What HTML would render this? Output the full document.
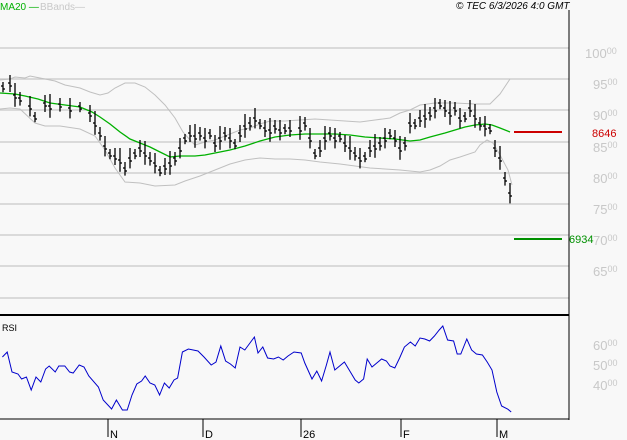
<!DOCTYPE html><html><head><style>
body{margin:0;background:#f8f8f8;}
svg{display:block;font-family:"Liberation Sans",sans-serif}
.l{fill:#c8c8c8;font-size:13px}
.s{font-size:9px}
</style></head><body>
<svg id="c" width="627" height="440" xmlns="http://www.w3.org/2000/svg">
<rect width="627" height="440" fill="#f8f8f8"/>
<g stroke="#c8c8c8" stroke-width="1.2">
<line x1="0" y1="48" x2="569" y2="48"/><line x1="0" y1="79" x2="569" y2="79"/><line x1="0" y1="110" x2="569" y2="110"/><line x1="0" y1="142" x2="569" y2="142"/><line x1="0" y1="173" x2="569" y2="173"/><line x1="0" y1="204" x2="569" y2="204"/><line x1="0" y1="235" x2="569" y2="235"/><line x1="0" y1="266" x2="569" y2="266"/><line x1="0" y1="298" x2="569" y2="298"/>
</g>
<g class="l">
<text x="585" y="58">100<tspan class="s" dy="-4">00</tspan></text>
<text x="593" y="89">95<tspan class="s" dy="-4">00</tspan></text>
<text x="593" y="120">90<tspan class="s" dy="-4">00</tspan></text>
<text x="593" y="152">85<tspan class="s" dy="-4">00</tspan></text>
<text x="593" y="183">80<tspan class="s" dy="-4">00</tspan></text>
<text x="593" y="214">75<tspan class="s" dy="-4">00</tspan></text>
<text x="593" y="245">70<tspan class="s" dy="-4">00</tspan></text>
<text x="593" y="276">65<tspan class="s" dy="-4">00</tspan></text>
<text x="593" y="350">60<tspan class="s" dy="-4">00</tspan></text>
<text x="593" y="370">50<tspan class="s" dy="-4">00</tspan></text>
<text x="593" y="390">40<tspan class="s" dy="-4">00</tspan></text>
</g>
<polyline fill="none" stroke="#c0c0c0" points="0,80 10,79 15,77 25,78 30,76 40,78 55,81 65,85 80,88 90,92 100,95 108,93 115,88 125,83 135,83 145,87 155,95 165,105 175,118 183,132 190,140 195,145 205,142 215,140 225,136 240,130 250,128 260,124 270,121 285,121 300,120 315,119 330,120 345,121 360,122 375,120 390,118 400,113 410,110 420,105 435,103 455,103 475,104 490,104 500,94 510,79"/>
<polyline fill="none" stroke="#c0c0c0" points="0,109 10,108 20,109 35,123 45,126 60,126 80,129 95,136 105,150 115,168 125,182 140,183 155,186 175,185 185,181 200,176 215,170 230,164 245,160 260,158 275,159 290,159 305,160 320,162 340,164 355,166 370,168 385,169 400,170 410,171 420,172 430,170 440,166 450,160 460,157 475,152 480,145 487,140 493,143 500,155 508,170 512,185"/>
<polyline fill="none" stroke="#00b000" stroke-width="1.3" points="0,93 15,94 25,96 38,99 50,103 65,105 80,107 92,112 100,117 110,124 120,132 130,139 140,143 150,147 160,152 170,157 180,156 195,156 205,155 215,153 230,150 245,146 260,141 275,137 290,135 305,134 320,134 335,134 350,135 365,137 380,138 395,139 410,141 420,140 430,137 445,133 455,130 465,127 475,125 485,124 492,125 500,128 510,132"/>
<g id="bars" stroke="#000" stroke-width="1.3"></g>
<line x1="514" y1="132" x2="562" y2="132" stroke="#cc0000" stroke-width="2"/>
<line x1="514" y1="239" x2="562" y2="239" stroke="#009000" stroke-width="2"/>
<text x="592" y="137" fill="#cc0000" font-size="11">8646</text>
<text x="569" y="243" fill="#009000" font-size="11">6934</text>
<line x1="569" y1="10" x2="569" y2="420" stroke="#000" stroke-width="1"/>
<line x1="0" y1="315" x2="569" y2="315" stroke="#000" stroke-width="2"/>
<line x1="0" y1="419" x2="569" y2="419" stroke="#000" stroke-width="1"/>
<text x="0" y="10" fill="#00b000" font-size="10">MA20 —</text>
<text x="40" y="10" fill="#c8c8c8" font-size="10">BBands—</text>
<text x="456" y="9" fill="#000" font-size="10" font-style="italic">© TEC 6/3/2026 4:0 GMT</text>
<text x="2" y="331" fill="#000" font-size="9">RSI</text>
<polyline id="rsi" fill="none" stroke="#0000cc" stroke-width="1"/>
<g stroke="#000"><line x1="108" y1="419" x2="108" y2="437"/><line x1="203" y1="419" x2="203" y2="437"/><line x1="301" y1="419" x2="301" y2="437"/><line x1="401" y1="419" x2="401" y2="437"/><line x1="497" y1="419" x2="497" y2="437"/></g>
<g font-size="11" fill="#000"><text x="110" y="438">N</text><text x="205" y="438">D</text><text x="303" y="438">26</text><text x="403" y="438">F</text><text x="499" y="438">M</text></g>
</svg>
<script>
var P=[[3,88],[10,85],[15,97],[20,100],[30,108],[35,118],[45,105],[50,108],[60,106],[70,110],[80,108],[90,115],[95,125],[100,135],[105,148],[110,155],[115,158],[120,162],[125,170],[130,160],[135,155],[140,150],[145,155],[150,160],[155,165],[160,172],[165,168],[170,165],[175,160],[180,150],[185,140],[190,135],[195,138],[200,135],[205,140],[210,135],[215,145],[220,140],[225,135],[230,140],[235,145],[240,135],[245,128],[250,125],[255,120],[260,125],[265,130],[270,132],[275,128],[280,132],[285,130],[290,130],[300,130],[305,125],[310,140],[315,155],[320,150],[325,140],[330,135],[335,140],[340,138],[345,145],[350,150],[355,155],[360,160],[365,158],[370,150],[375,148],[380,145],[385,140],[390,135],[395,140],[400,150],[405,145],[410,125],[415,125],[420,120],[425,118],[430,115],[435,110],[440,105],[445,110],[450,115],[455,110],[460,120],[465,118],[470,110],[475,118],[480,125],[485,128],[490,130],[495,150],[500,160],[505,180],[510,195]];
var g=document.getElementById('bars'),s='',k=0;
for(var i=0;i<P.length;i++){var x=P[i][0],y=P[i][1],h=6+((k++*7)%5)*2;
s+='<line x1="'+x+'" y1="'+(y-h)+'" x2="'+x+'" y2="'+(y+h*0.7)+'"/><line x1="'+(x-2)+'" y1="'+(y-2)+'" x2="'+x+'" y2="'+(y-2)+'"/><line x1="'+x+'" y1="'+(y+1)+'" x2="'+(x+2)+'" y2="'+(y+1)+'"/>';}
g.innerHTML=s;
var R=[[2,357],[6,352],[10,372],[15,374],[18,379],[22,377],[26,390],[30,377],[34,382],[38,369],[41,366],[46,372],[49,366],[54,366],[58,372],[61,373],[66,365],[70,367],[74,376],[82,387],[86,400],[93,409],[97,400],[102,410],[106,410],[110,395],[114,384],[118,381],[121,376],[125,383],[129,385],[133,395],[137,383],[141,388],[145,380],[148,378],[152,352],[157,349],[165,351],[170,357],[176,365],[180,362],[184,346],[188,361],[192,364],[196,368],[200,347],[204,350],[212,337],[215,353],[219,347],[223,358],[228,359],[232,357],[236,360],[240,356],[245,352],[251,353],[254,363],[260,379],[264,371],[268,381],[272,365],[275,352],[279,370],[283,366],[287,362],[291,370],[296,380],[299,383],[303,379],[306,359],[310,367],[314,363],[318,359],[322,361],[325,366],[329,368],[333,358],[337,347],[342,342],[346,346],[350,338],[354,339],[358,341],[362,336],[366,330],[369,326],[373,340],[378,341],[381,354],[384,354],[389,339],[393,350],[397,354],[402,355],[406,362],[410,370],[414,392],[418,406],[423,409],[426,412]];
document.getElementById('rsi').setAttribute('points',R.map(function(p){return (p[0]*1.2)+','+p[1]}).join(' '));
</script>
</body></html>
